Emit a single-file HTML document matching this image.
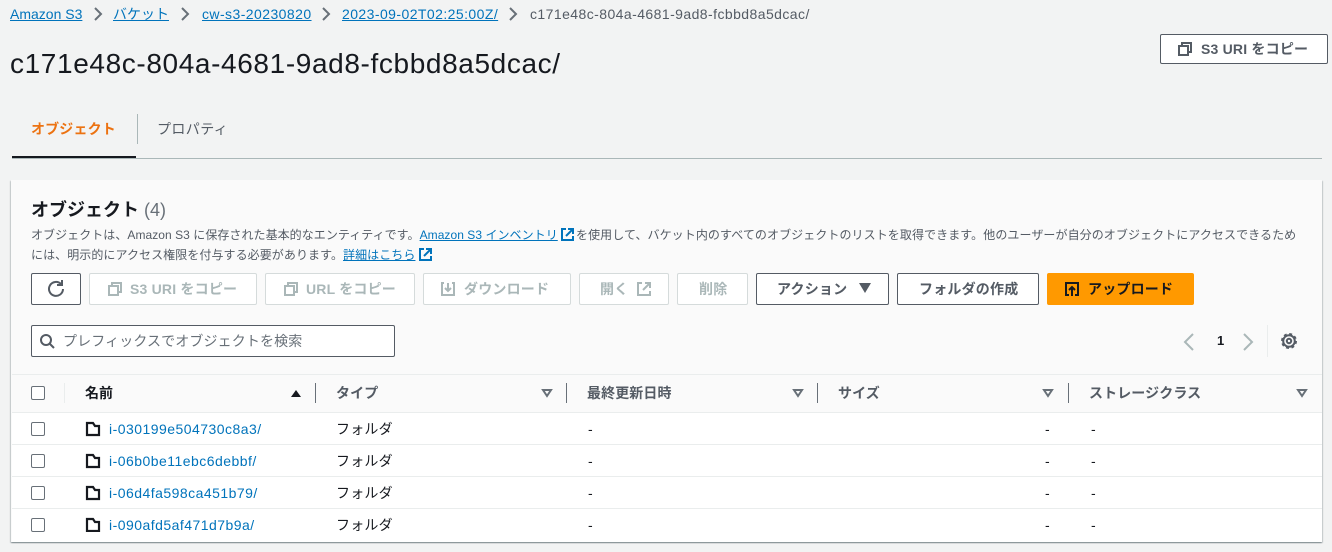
<!DOCTYPE html>
<html lang="ja"><head><meta charset="utf-8">
<style>
html,body{margin:0;padding:0;width:1332px;height:552px;overflow:hidden;background:#f2f3f3}
body{position:relative;font-family:"Liberation Sans","Noto Sans CJK JP",sans-serif;color:#16191f;font-size:14px}
.t{position:absolute;white-space:nowrap;line-height:20px}
.b{position:absolute;box-sizing:border-box;height:32px;top:273px;border:1px solid #545b64;border-radius:2px;background:#fff;font-weight:700;color:#545b64;white-space:nowrap;line-height:30px;font-size:14px;letter-spacing:.2px}
.d{border-color:#d5dbdb;color:#aab7b8}
.b span{position:absolute;top:0}
.b svg,.abs{position:absolute}
.l{color:#0073bb;text-decoration:underline}
.r{position:absolute;left:12px;width:1310px;height:1px;background:#eaeded}
.lnk{color:#0073bb;letter-spacing:.47px}
.bc{letter-spacing:.43px}
.cb{position:absolute;left:31px;width:14px;height:14px;box-sizing:border-box;border:1px solid #687078;border-radius:2px;background:#fff}
.h{font-weight:700;color:#545b64;letter-spacing:.1px}
</style></head><body>
<div class="t" style="left:10px;top:4px"><span class="l">Amazon S3</span></div>
<div class="t" style="left:113px;top:4px"><span class="l">バケット</span></div>
<div class="t bc" style="left:202px;top:4px"><span class="l">cw-s3-20230820</span></div>
<div class="t bc" style="left:342px;top:4px"><span class="l">2023-09-02T02:25:00Z/</span></div>
<div class="t bc" style="left:530px;top:4px;color:#545b64">c171e48c-804a-4681-9ad8-fcbbd8a5dcac/</div>
<svg class="abs" style="left:0;top:0" width="530" height="30" fill="none" stroke="#687078" stroke-width="2"><path d="M95 8l6 6-6 6M182 8l6 6-6 6M323 8l6 6-6 6M510 8l6 6-6 6"/></svg>
<div class="t" style="left:10px;top:47px;font-size:28px;line-height:34px;color:#16191f;letter-spacing:.62px">c171e48c-804a-4681-9ad8-fcbbd8a5dcac/</div>

<div class="b" style="left:1160px;top:34px;width:168px;height:30px;line-height:28px;color:#545b64">
<svg style="left:16px;top:6px" width="16" height="16" fill="none" stroke="#545b64" stroke-width="2"><path d="M5 4V2h9v9h-3M2 5h9v9H2z"/></svg><span style="left:40px">S3 URI をコピー</span></div>

<div class="t" style="left:31px;top:119px;font-weight:700;color:#ec7211;letter-spacing:.15px">オブジェクト</div>
<div class="t" style="left:157px;top:119px;color:#545b64;letter-spacing:.4px">プロパティ</div>
<div class="abs" style="left:137px;top:114px;width:1px;height:30px;background:#aab7b8"></div>
<div class="abs" style="left:12px;top:158px;width:1310px;height:1px;background:#aab7b8"></div>
<div class="abs" style="left:12px;top:156px;width:124px;height:2px;background:#16191f"></div>

<div class="abs" style="left:11px;top:180px;width:1311px;height:362px;background:#fafafa;box-shadow:0 1px 1px 0 rgba(0,28,36,.3),1px 1px 1px 0 rgba(0,28,36,.15),-1px 1px 1px 0 rgba(0,28,36,.15)"></div>
<div class="abs" style="left:12px;top:413px;width:1310px;height:129px;background:#fff"></div>
<div class="r" style="top:374px"></div><div class="r" style="top:412px"></div><div class="r" style="top:444px"></div><div class="r" style="top:476px"></div><div class="r" style="top:508px"></div>

<div class="t" style="left:31px;top:198px;font-size:18px;line-height:24px;font-weight:700">オブジェクト <span style="font-weight:400;color:#687078">(4)</span></div>
<div class="t" style="left:31px;top:225px;font-size:12px;color:#545b64;letter-spacing:.05px">オブジェクトは、Amazon S3 に保存された基本的なエンティティです。<span class="l">Amazon S3 インベントリ </span></div>
<svg class="abs" style="left:560px;top:227px" width="15" height="15" fill="none" stroke="#0073bb" stroke-width="2"><path d="M6 2H2v11h11V9M8 2h5v5M13 2L6 9"/></svg>
<div class="t" style="left:576px;top:225px;font-size:12px;color:#545b64;letter-spacing:.08px">を使用して、バケット内のすべてのオブジェクトのリストを取得できます。他のユーザーが自分のオブジェクトにアクセスできるため</div>
<div class="t" style="left:31px;top:245px;font-size:12px;color:#545b64;letter-spacing:.07px">には、明示的にアクセス権限を付与する必要があります。<span class="l">詳細はこちら </span></div>
<svg class="abs" style="left:418px;top:247px" width="15" height="15" fill="none" stroke="#0073bb" stroke-width="2"><path d="M6 2H2v11h11V9M8 2h5v5M13 2L6 9"/></svg>

<div class="b" style="left:31px;width:50px"><svg style="left:15px;top:5px" width="18" height="18" fill="none" stroke="#545b64" stroke-width="2"><path d="M14 5a7 7 0 1 0 2 5"/><path d="M15 1v5h-5"/></svg></div>
<div class="b d" style="left:89px;width:168px"><svg style="left:17px;top:7px" width="16" height="16" fill="none" stroke="#aab7b8" stroke-width="2"><path d="M5 4V2h9v9h-3M2 5h9v9H2z"/></svg><span style="left:40px">S3 URI をコピー</span></div>
<div class="b d" style="left:265px;width:150px"><svg style="left:17px;top:7px" width="16" height="16" fill="none" stroke="#aab7b8" stroke-width="2"><path d="M5 4V2h9v9h-3M2 5h9v9H2z"/></svg><span style="left:40px">URL をコピー</span></div>
<div class="b d" style="left:423px;width:148px"><svg style="left:16px;top:7px" width="16" height="16" fill="none" stroke="#aab7b8" stroke-width="2"><path d="M4 2H2v12h12V2h-2M8 2v8M5 7l3 3 3-3"/></svg><span style="left:40px">ダウンロード</span></div>
<div class="b d" style="left:579px;width:90px"><span style="left:20px">開く</span><svg style="left:56px;top:7px" width="16" height="16" fill="none" stroke="#aab7b8" stroke-width="2"><path d="M6 2H2v12h12v-4M9 2h5v5M14 2L7 9"/></svg></div>
<div class="b d" style="left:677px;width:71px"><span style="left:21px">削除</span></div>
<div class="b" style="left:756px;width:133px"><span style="left:20px">アクション</span><svg style="left:102px;top:9px" width="12" height="11" fill="#545b64"><path d="M0 0h12L6 10z"/></svg></div>
<div class="b" style="left:897px;width:142px"><span style="left:21px">フォルダの作成</span></div>
<div class="b" style="left:1047px;width:147px;background:#ff9900;border-color:#ff9900;color:#16191f"><svg style="left:16px;top:7px" width="16" height="16" fill="none" stroke="#16191f" stroke-width="2"><path d="M5 14H2V2h12v12h-3M8 15V7M5 9l3-3 3 3"/></svg><span style="left:40px">アップロード</span></div>

<div class="abs" style="left:31px;top:325px;width:364px;height:32px;box-sizing:border-box;border:1px solid #545b64;border-radius:2px;background:#fff"></div>
<svg class="abs" style="left:39px;top:333px" width="16" height="16" fill="none" stroke="#545b64" stroke-width="2"><circle cx="7" cy="7" r="5"/><path d="M11 11l4 4"/></svg>
<div class="t" style="left:63px;top:331px;color:#687078;letter-spacing:.12px">プレフィックスでオブジェクトを検索</div>

<svg class="abs" style="left:1180px;top:325px" width="130" height="34" fill="none" stroke-width="2"><path d="M13 9l-8 8 8 8M64 9l8 8-8 8" stroke="#aab7b8"/><g stroke="#545b64"><circle cx="109" cy="16" r="2.200"/><circle cx="109" cy="16" r="5.800"/><circle cx="109" cy="16" r="7" stroke-dasharray="2.900 2.600"/></g></svg>
<div class="t" style="left:1217px;top:331px;font-size:13px;font-weight:700;color:#16191f">1</div>
<div class="abs" style="left:1267px;top:325px;width:1px;height:32px;background:#eaeded"></div>

<div class="cb" style="top:386px"></div>
<div class="abs" style="left:64px;top:383px;width:1px;height:20px;background:#eaeded"></div>
<div class="t" style="left:85px;top:383px;font-weight:700">名前</div>
<div class="t h" style="left:336px;top:383px">タイプ</div>
<div class="t h" style="left:587px;top:383px">最終更新日時</div>
<div class="t h" style="left:838px;top:383px">サイズ</div>
<div class="t h" style="left:1089px;top:383px">ストレージクラス</div>
<svg class="abs" style="left:0;top:380px" width="1332" height="30"><path d="M291 17l5-7 5 7z" fill="#16191f"/><g fill="none" stroke="#687078" stroke-width="2"><path d="M543 10h8l-4 6zM794 10h8l-4 6zM1044 10h8l-4 6zM1298 10h8l-4 6z"/></g><path d="M315.500 3v20M566.500 3v20M817.500 3v20M1068.500 3v20" stroke="#687078"/></svg>

<div class="cb" style="top:422px"></div>
<div class="cb" style="top:454px"></div>
<div class="cb" style="top:486px"></div>
<div class="cb" style="top:518px"></div>
<svg class="abs" style="left:85px;top:420px" width="16" height="112" fill="none" stroke="#16191f" stroke-width="2.200"><path d="M2 3h6l2 3h4v9H2z"/><path d="M2 35h6l2 3h4v9H2zM2 67h6l2 3h4v9H2zM2 99h6l2 3h4v9H2z"/></svg>

<div class="t lnk" style="left:109px;top:419px">i-030199e504730c8a3/</div><div class="t" style="left:336px;top:419px;letter-spacing:.2px">フォルダ</div><div class="t" style="left:588px;top:419px">-</div><div class="t" style="left:1045px;top:419px">-</div><div class="t" style="left:1091px;top:419px">-</div>
<div class="t lnk" style="left:109px;top:451px">i-06b0be11ebc6debbf/</div><div class="t" style="left:336px;top:451px;letter-spacing:.2px">フォルダ</div><div class="t" style="left:588px;top:451px">-</div><div class="t" style="left:1045px;top:451px">-</div><div class="t" style="left:1091px;top:451px">-</div>
<div class="t lnk" style="left:109px;top:483px">i-06d4fa598ca451b79/</div><div class="t" style="left:336px;top:483px;letter-spacing:.2px">フォルダ</div><div class="t" style="left:588px;top:483px">-</div><div class="t" style="left:1045px;top:483px">-</div><div class="t" style="left:1091px;top:483px">-</div>
<div class="t lnk" style="left:109px;top:515px">i-090afd5af471d7b9a/</div><div class="t" style="left:336px;top:515px;letter-spacing:.2px">フォルダ</div><div class="t" style="left:588px;top:515px">-</div><div class="t" style="left:1045px;top:515px">-</div><div class="t" style="left:1091px;top:515px">-</div>
</body></html>
